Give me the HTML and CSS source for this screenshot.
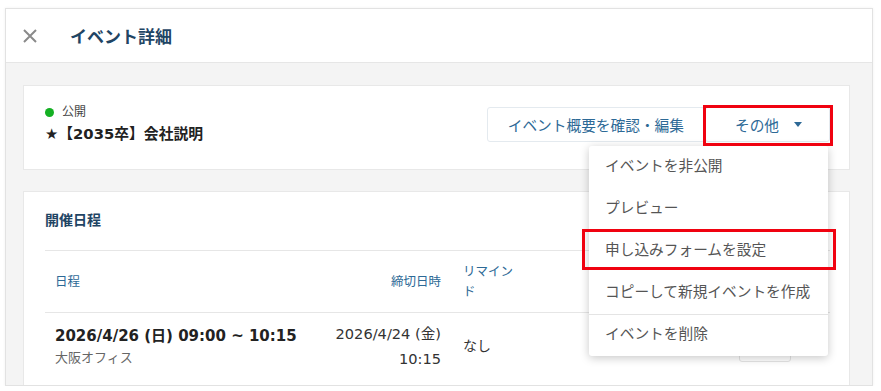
FILE: index.html
```html
<!DOCTYPE html>
<html lang="ja">

<head>
    <meta charset="UTF-8">
    <meta name="viewport" content="width=device-width, initial-scale=1.0">
    <title>イベント詳細</title>
    <link rel="stylesheet" href="styles.css">
</head>

<body>
    <div class="panel">
        <header class="panel-header">
            <button class="close-btn" aria-label="閉じる">
                <svg width="16" height="16" viewBox="0 0 16 16">
                    <path d="M2 2 L14 14 M14 2 L2 14" stroke="#8a8a8a" stroke-width="2" fill="none" />
                </svg>
            </button>
            <h1 class="panel-title">イベント詳細</h1>
        </header>

        <div class="panel-body">
            <section class="card summary">
                <div class="summary-info">
                    <div class="status"><span class="dot"></span>公開</div>
                    <div class="event-name">★【2035卒】会社説明</div>
                </div>
                <div class="actions">
                    <button class="btn">イベント概要を確認・編集</button>
                    <button class="btn btn-more">その他<span class="caret"></span></button>
                    <span class="highlight hl-more"></span>

                    <ul class="menu">
                        <li>イベントを非公開</li>
                        <li>プレビュー</li>
                        <li>申し込みフォームを設定</li>
                        <li>コピーして新規イベントを作成</li>
                        <li class="divider">イベントを削除</li>
                    </ul>
                    <span class="highlight hl-form"></span>
                </div>
            </section>

            <section class="card schedule">
                <h2 class="card-title">開催日程</h2>
                <table class="schedule-table">
                    <thead>
                        <tr>
                            <th class="col-date">日程</th>
                            <th class="col-deadline">締切日時</th>
                            <th class="col-remind">リマインド</th>
                            <th class="col-rest"></th>
                        </tr>
                    </thead>
                    <tbody>
                        <tr>
                            <td class="col-date">
                                <div class="date-main">2026/4/26 (日) 09:00 ~ 10:15</div>
                                <div class="date-place">大阪オフィス</div>
                            </td>
                            <td class="col-deadline">2026/4/24 (金)<br>10:15</td>
                            <td class="col-remind">なし</td>
                            <td class="col-rest"><span class="mini-btn"></span></td>
                        </tr>
                    </tbody>
                </table>
            </section>
        </div>
    </div>
</body>

</html>
```

FILE: styles.css
```css
body {
    margin: 0;
    background: #fff;
    font-family: "DejaVu Sans", "Noto Sans CJK JP", sans-serif;
    color: #333;
    overflow: hidden;
}

.panel {
    margin: 8px 8px 0 5px;
    height: 376px;
    border: 1px solid #e2e2e2;
    box-shadow: 0 0 3px rgba(0, 0, 0, 0.06);
    background: #f4f4f4;
    overflow: hidden;
}

.panel-header {
    display: flex;
    align-items: center;
    height: 53px;
    background: #fff;
    border-bottom: 1px solid #e6e6e6;
}

.close-btn {
    border: none;
    background: none;
    padding: 0;
    margin-left: 16px;
    width: 16px;
    height: 16px;
    display: flex;
}

.panel-title {
    margin: 0 0 0 32px;
    font-size: 17px;
    font-weight: bold;
    color: #1f4564;
}

.panel-body {
    padding: 22px 22px 0 17px;
    display: flex;
    flex-direction: column;
    gap: 21px;
}

.card {
    background: #fff;
    border: 1px solid #e8e8e8;
}

.summary {
    display: flex;
    align-items: flex-start;
    justify-content: space-between;
    height: 83px;
    padding: 0 19px 0 21px;
}

.summary-info {
    padding-top: 17px;
}

.status {
    display: flex;
    align-items: center;
    font-size: 12px;
    color: #444;
    line-height: 18px;
}

.dot {
    width: 9px;
    height: 9px;
    border-radius: 50%;
    background: #14b023;
    margin-right: 8px;
}

.event-name {
    margin-top: 3px;
    line-height: 20px;
    font-size: 14.8px;
    font-weight: bold;
    color: #222;
}

.actions {
    position: relative;
    display: flex;
    margin-top: 21px;
}

.btn {
    height: 35px;
    border: 1px solid #e4eaef;
    background: #fff;
    border-radius: 3px;
    padding: 0 20px;
    font-family: inherit;
    font-size: 14.7px;
    color: #2d6996;
}

.btn-more {
    width: 125px;
    display: flex;
    align-items: center;
    justify-content: center;
    gap: 15px;
    padding: 0 0 0 2px;
}

.caret {
    width: 0;
    height: 0;
    border-left: 4.5px solid transparent;
    border-right: 4.5px solid transparent;
    border-top: 5px solid #2d6996;
}

.highlight {
    position: absolute;
    border: 3px solid #f00210;
    pointer-events: none;
    z-index: 3;
}

.hl-more {
    right: -3px;
    top: -2px;
    width: 124px;
    height: 35px;
}

.hl-form {
    right: -6px;
    top: 122px;
    width: 248px;
    height: 35px;
}

.menu {
    position: absolute;
    top: 39px;
    right: 2px;
    width: 239px;
    margin: 0;
    padding: 0;
    list-style: none;
    background: #fff;
    border-radius: 3px;
    box-shadow: 0 2px 10px rgba(0, 0, 0, 0.22);
    z-index: 2;
}

.menu li {
    height: 42px;
    line-height: 39px;
    padding-left: 16px;
    font-size: 14.7px;
    color: #555;
}

.menu li.divider {
    height: 41px;
    border-top: 1px solid #e4e4e4;
    line-height: 38px;
}

.schedule {
    padding: 0 19px 0 21px;
    height: 200px;
}

.card-title {
    margin: 0;
    padding: 17px 0 0;
    height: 41px;
    line-height: 22px;
    font-size: 14px;
    font-weight: bold;
    color: #1f4564;
    border-bottom: 1px solid #e6e6e6;
}

.schedule-table {
    width: 100%;
    border-collapse: collapse;
    table-layout: fixed;
}

.schedule-table th {
    height: 61px;
    font-size: 12.5px;
    font-weight: normal;
    color: #2d6996;
    text-align: left;
    line-height: 20px;
    border-bottom: 1px solid #e6e6e6;
    padding: 0 10px;
}

.schedule-table td {
    height: 62px;
    font-size: 14px;
    color: #333;
    padding: 0 10px;
    white-space: nowrap;
}

.schedule-table .col-date {
    width: 250px;
}

.schedule-table .col-deadline {
    width: 116px;
    text-align: right;
    line-height: 25px;
    padding-top: 2px;
    font-size: 14.6px;
}

.schedule-table th.col-deadline {
    padding-top: 0;
    line-height: 20px;
    font-size: 12.5px;
}

.schedule-table .col-remind {
    width: 52px;
    padding-left: 12px;
}

.date-main {
    font-size: 15px;
    font-weight: bold;
    color: #222;
}

.date-place {
    font-size: 13px;
    color: #666;
    margin-top: 2px;
}

.mini-btn {
    display: inline-block;
    vertical-align: middle;
    margin-left: 204px;
    width: 50px;
    height: 32px;
    border: 1px solid #e4e4e4;
    border-radius: 3px;
}
```
